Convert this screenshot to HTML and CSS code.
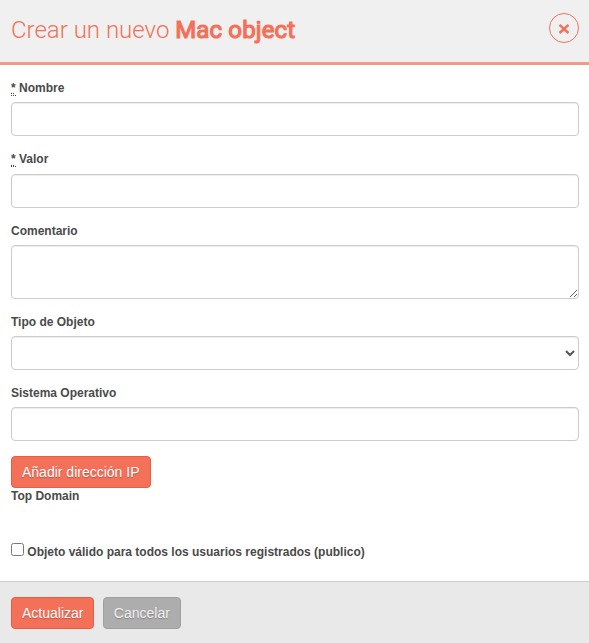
FILE: index.html
```html
<!DOCTYPE html>
<html lang="es">
<head>
<meta charset="utf-8">
<title>Crear un nuevo Mac object</title>
<link rel="stylesheet" href="styles.css">
</head>
<body>
<form class="modal">
  <header class="header">
    <h1 class="title">Crear un nuevo <b>Mac object</b></h1>
    <button type="button" class="close" aria-label="Cerrar">
      <svg width="12" height="12" viewBox="0 0 12 12"><path d="M1.5 2.8l9 8.2M10.5 2.8l-9 8.2"/></svg>
    </button>
  </header>
  <div class="body">
    <div class="field"><label for="n"><abbr title="requerido">*</abbr> Nombre</label><input class="control" id="n" type="text"></div>
    <div class="field"><label for="v"><abbr title="requerido">*</abbr> Valor</label><input class="control" id="v" type="text"></div>
    <div class="field"><label for="c">Comentario</label><textarea class="control area" id="c"></textarea></div>
    <div class="field"><label for="t">Tipo de Objeto</label><select class="control" id="t"><option></option></select></div>
    <div class="field"><label for="s">Sistema Operativo</label><input class="control" id="s" type="text"></div>
    <button type="button" class="btn primary">Añadir dirección IP</button>
    <div class="domain">Top Domain</div>
    <label class="check"><input type="checkbox"> Objeto válido para todos los usuarios registrados (publico)</label>
  </div>
  <footer class="footer">
    <button type="button" class="btn primary">Actualizar</button>
    <button type="button" class="btn muted">Cancelar</button>
  </footer>
</form>
</body>
</html>
```
FILE: styles.css
```css
* { box-sizing: border-box; }
body {
  margin: 0;
  background: #fff;
  color: #4a4a4a;
  font: 12px/17.14px "Liberation Sans", Arial, sans-serif;
}
.modal { display: flex; flex-direction: column; height: 643px; }
.header {
  display: flex;
  justify-content: space-between;
  height: 65px;
  padding: 13px 10px 0 11px;
  background: #f0f0f0;
  border-bottom: 3px solid #f69884;
}
.title {
  margin: 0;
  color: #f37059;
  font: 300 24px/34px Roboto, sans-serif;
}
.title b { font-weight: 400; -webkit-text-stroke: 1.2px #f37059; letter-spacing: 0.15px; }
.close {
  display: flex;
  align-items: center;
  justify-content: center;
  width: 30px;
  height: 30px;
  padding: 0;
  border: 1px solid #f37059;
  border-radius: 50%;
  background: none;
}
.close path { stroke: #f37059; stroke-width: 2.4; fill: none; }
.body { flex: 1; padding: 15.3px 10px 0 11px; }
.field { margin-bottom: 15px; }
.field label { display: block; height: 17.14px; margin-bottom: 5px; font-weight: 700; }
abbr { text-decoration: underline dotted; border-bottom: 1px dotted #4a4a4a; }
.control {
  display: block;
  width: 100%;
  height: 34px;
  padding: 6px;
  border: 1px solid #ccc;
  border-radius: 4px;
  background-color: #fff;
  color: #555;
  box-shadow: inset 0 1px 1px rgba(0, 0, 0, .075);
}
.area { height: 54px; resize: vertical; }
.btn {
  display: block;
  height: 32px;
  padding: 0 10px;
  border: 1px solid;
  border-radius: 4px;
  color: #fff;
  font: 14px/20px "Liberation Sans", Arial, sans-serif;
  text-shadow: 0 1px 1px rgba(0, 0, 0, .25);
}
.primary { background: #f37059; border-color: #f05a40; }
.muted { background: #adadad; border-color: #9f9f9f; color: #f0f0f0; }
.domain { font-weight: 700; }
.check { display: block; margin-top: 38px; font-weight: 700; }
.check input { margin: 0; }
.footer {
  display: flex;
  gap: 8.4px;
  height: 62px;
  padding: 15px 11px;
  background: #e9e9e9;
  border-top: 1px solid #ccc;
}
```
